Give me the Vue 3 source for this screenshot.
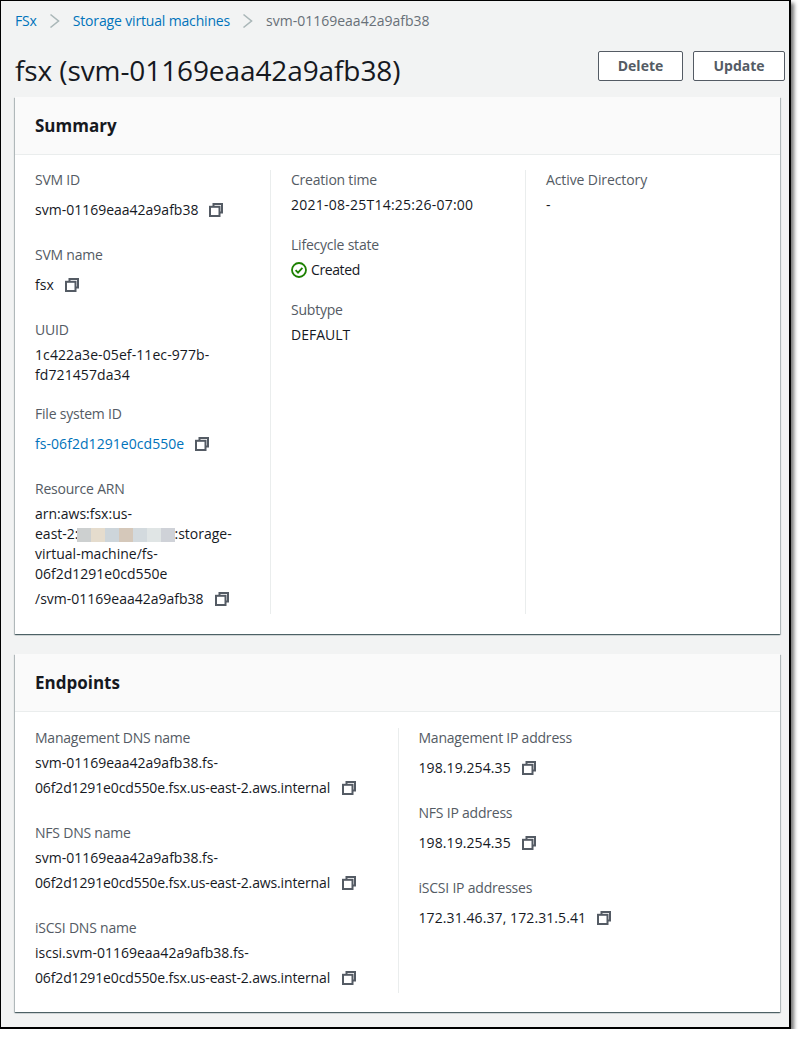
<script setup>
const summaryCols = [
  [
    { label: 'SVM ID', lines: [], copy: 'svm-01169eaa42a9afb38' },
    { label: 'SVM name', lines: [], copy: 'fsx' },
    { label: 'UUID', lines: ['1c422a3e-05ef-11ec-977b-', 'fd721457da34'], cls: 'mid uuid' },
    { label: 'File system ID', lines: [], copy: 'fs-06f2d1291e0cd550e', link: true },
    { label: 'Resource ARN', arn: true, lines: ['arn:aws:fsx:us-'], after: ['virtual-machine/fs-', '06f2d1291e0cd550e'], copy: '/svm-01169eaa42a9afb38' }
  ],
  [
    { label: 'Creation time', lines: ['2021-08-25T14:25:26-07:00'], cls: 'wide' },
    { label: 'Lifecycle state', status: 'Created', lines: [] },
    { label: 'Subtype', lines: ['DEFAULT'] }
  ],
  [{ label: 'Active Directory', lines: ['-'], cls: 'loose' }]
]
const endpointCols = [
  [
    { label: 'Management DNS name', lines: ['svm-01169eaa42a9afb38.fs-'], copy: '06f2d1291e0cd550e.fsx.us-east-2.aws.internal', cls: 'tight' },
    { label: 'NFS DNS name', lines: ['svm-01169eaa42a9afb38.fs-'], copy: '06f2d1291e0cd550e.fsx.us-east-2.aws.internal', cls: 'tight' },
    { label: 'iSCSI DNS name', lines: ['iscsi.svm-01169eaa42a9afb38.fs-'], copy: '06f2d1291e0cd550e.fsx.us-east-2.aws.internal', cls: 'tight' }
  ],
  [
    { label: 'Management IP address', lines: [], copy: '198.19.254.35', cls: 'mid' },
    { label: 'NFS IP address', lines: [], copy: '198.19.254.35', cls: 'mid' },
    { label: 'iSCSI IP addresses', lines: [], copy: '172.31.46.37, 172.31.5.41', cls: 'mid' }
  ]
]
const cards = [
  { title: 'Summary', cols: summaryCols, cls: 'three' },
  { title: 'Endpoints', cols: endpointCols, cls: 'two' }
]
const blur = ['#cdd0d0', '#e5dccd', '#cdd5da', '#d5c8ba', '#d3dade', '#e0e5e5', '#cfd2d8']
</script>

<template>
  <div class="frame">
    <nav class="crumbs">
      <a>FSx</a>
      <svg class="chev" width="16" height="16" viewBox="0 0 16 16"><path d="M3.5 1.5l8 6.5-8 6.5" /></svg>
      <a>Storage virtual machines</a>
      <svg class="chev" width="16" height="16" viewBox="0 0 16 16"><path d="M3.5 1.5l8 6.5-8 6.5" /></svg>
      <span>svm-01169eaa42a9afb38</span>
    </nav>
    <header class="head">
      <h1>fsx (svm-01169eaa42a9afb38)</h1>
      <div class="actions">
        <button class="delete">Delete</button>
        <button class="update">Update</button>
      </div>
    </header>
    <section v-for="card in cards" :key="card.title" class="card">
      <h2>{{ card.title }}</h2>
      <div class="body" :class="card.cls">
        <div v-for="(col, i) in card.cols" :key="i" class="col">
          <div v-for="f in col" :key="f.label" class="field" :class="f.cls">
            <div class="label">{{ f.label }}</div>
            <div v-for="l in f.lines" :key="l" class="line">{{ l }}</div>
            <div v-if="f.arn" class="line">east-2:<span class="blur"><i v-for="c in blur" :key="c" :style="{ background: c }"></i></span>:storage-</div>
            <div v-for="l in f.after || []" :key="l" class="line">{{ l }}</div>
            <div v-if="f.status" class="line status">
              <svg width="16" height="16" viewBox="0 0 16 16"><circle cx="8" cy="8" r="7" /><path d="M4.6 8.2l2.4 2.4 4.4-4.8" /></svg>
              <span>{{ f.status }}</span>
            </div>
            <div v-if="f.copy" class="copyline">
              <a v-if="f.link">{{ f.copy }}</a>
              <span v-else>{{ f.copy }}</span>
              <svg class="copy" width="14" height="14" viewBox="0 0 14 14"><path d="M4.5 3.5V1h8.5v8.5h-2.5" /><rect x="1" y="3.8" width="9.5" height="9.2" /></svg>
            </div>
          </div>
        </div>
      </div>
    </section>
  </div>
</template>

<style scoped>
.frame {
  box-sizing: border-box;
  width: 791px;
  height: 1029px;
  border: 2px solid #000;
  border-width: 1px 2px 2px 1px;
  background: #f2f3f3;
  box-shadow: 3px 3px 4px rgba(0, 0, 0, 0.55);
  padding: 0 8px 0 14px;
  font: 14px/20px "Open Sans", sans-serif;
  color: #16191f;
}
.crumbs {
  display: flex;
  align-items: center;
  height: 40px;
  color: #687078;
}
.crumbs a { color: #0073bb; letter-spacing: -0.16px; }
.chev { margin: 0 10px; }
.chev path { fill: none; stroke: #aab7b8; stroke-width: 1.6; }
.head {
  display: flex;
  justify-content: space-between;
  height: 56px;
}
h1 {
  margin: 9px 0 0;
  font-size: 28px;
  line-height: 40px;
  font-weight: 400;
  letter-spacing: -0.1px;
}
.actions {
  display: flex;
  gap: 10px;
  padding-top: 10px;
  margin-right: -4px;
}
button {
  box-sizing: border-box;
  height: 30px;
  border: 1px solid #545b64;
  border-radius: 2px;
  background: #fff;
  color: #545b64;
  font: 700 14px/20px "Open Sans", sans-serif;
}
.delete { width: 85px; }
.update { width: 92px; }
.card {
  background: #fff;
  box-shadow: 0 1px 1px 0 rgba(0, 28, 36, 0.5), 1px 1px 1px 0 rgba(0, 28, 36, 0.2), -1px 1px 1px 0 rgba(0, 28, 36, 0.2);
  margin-bottom: 20px;
  width: 765px;
}
h2 {
  box-sizing: border-box;
  height: 58px;
  margin: 0;
  padding: 18px 20px 0;
  background: #fafafa;
  border-bottom: 1px solid #eaeded;
  font-size: 17px;
  line-height: 22px;
  font-weight: 700;
}
.body {
  display: grid;
  padding: 15px 0 20px;
}
.three { grid-template-columns: repeat(3, 255px); }
.two {
  grid-template-columns: repeat(2, 382.5px);
  padding: 16px 0 19px;
}
.col {
  box-sizing: border-box;
  padding: 0 20px;
  border-left: 1px solid #eaeded;
}
.col:first-child { border-left: 0; }
.field { margin-bottom: 20px; }
.field.uuid { margin-bottom: 19px; }
.field:last-child { margin-bottom: 0; }
.label {
  color: #545b64;
  margin-bottom: 5px;
  letter-spacing: -0.22px;
}
.loose .label { letter-spacing: -0.1px; }
.copyline {
  display: flex;
  align-items: center;
  height: 30px;
}
.copyline a { color: #0073bb; letter-spacing: 0.05px; }
.copy { margin-left: 11px; flex: none; }
.copy path, .copy rect { fill: #fff; stroke: #545b64; stroke-width: 2; }
.status {
  display: flex;
  align-items: center;
  gap: 4px;
  letter-spacing: -0.4px;
}
.status circle, .status path { fill: none; stroke: #1d8102; stroke-width: 1.8; }
.blur {
  display: inline-flex;
  vertical-align: -3px;
  height: 14px;
  margin-left: -2px;
}
.blur i {
  display: block;
  width: 14px;
}
.wide .line { letter-spacing: 0.24px; }
.mid .line, .mid .copyline span { letter-spacing: 0.09px; }
.tight .copyline span { letter-spacing: -0.14px; }
.tight .copy { margin-left: 12px; }
</style>

<style>
body { background: #fff; }
</style>
